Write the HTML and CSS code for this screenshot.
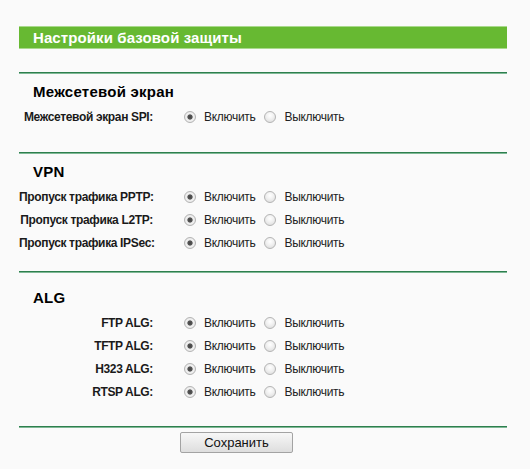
FILE: index.html
```html
<!DOCTYPE html>
<html lang="ru">
<head>
<meta charset="utf-8">
<title>Настройки базовой защиты</title>
<link rel="stylesheet" href="styles.css">
</head>
<body>
<div class="page">
  <div class="title-bar">Настройки базовой защиты</div>
  <div class="section s1">
    <div class="heading">Межсетевой экран</div>
    <div class="row">
      <div class="label">Межсетевой экран SPI:</div>
      <div class="choice">
        <input type="radio" name="spi" checked><span class="opt">Включить</span>
        <input type="radio" name="spi" class="second"><span class="opt">Выключить</span>
      </div>
    </div>
  </div>
  <div class="section s2">
    <div class="heading">VPN</div>
    <div class="row">
      <div class="label">Пропуск трафика PPTP:</div>
      <div class="choice">
        <input type="radio" name="pptp" checked><span class="opt">Включить</span>
        <input type="radio" name="pptp" class="second"><span class="opt">Выключить</span>
      </div>
    </div>
    <div class="row">
      <div class="label">Пропуск трафика L2TP:</div>
      <div class="choice">
        <input type="radio" name="l2tp" checked><span class="opt">Включить</span>
        <input type="radio" name="l2tp" class="second"><span class="opt">Выключить</span>
      </div>
    </div>
    <div class="row">
      <div class="label">Пропуск трафика IPSec:</div>
      <div class="choice">
        <input type="radio" name="ipsec" checked><span class="opt">Включить</span>
        <input type="radio" name="ipsec" class="second"><span class="opt">Выключить</span>
      </div>
    </div>
  </div>
  <div class="section s3">
    <div class="heading">ALG</div>
    <div class="row">
      <div class="label">FTP ALG:</div>
      <div class="choice">
        <input type="radio" name="ftp" checked><span class="opt">Включить</span>
        <input type="radio" name="ftp" class="second"><span class="opt">Выключить</span>
      </div>
    </div>
    <div class="row">
      <div class="label">TFTP ALG:</div>
      <div class="choice">
        <input type="radio" name="tftp" checked><span class="opt">Включить</span>
        <input type="radio" name="tftp" class="second"><span class="opt">Выключить</span>
      </div>
    </div>
    <div class="row">
      <div class="label">H323 ALG:</div>
      <div class="choice">
        <input type="radio" name="h323" checked><span class="opt">Включить</span>
        <input type="radio" name="h323" class="second"><span class="opt">Выключить</span>
      </div>
    </div>
    <div class="row">
      <div class="label">RTSP ALG:</div>
      <div class="choice">
        <input type="radio" name="rtsp" checked><span class="opt">Включить</span>
        <input type="radio" name="rtsp" class="second"><span class="opt">Выключить</span>
      </div>
    </div>
  </div>
  <div class="footer">
    <button type="button" class="save">Сохранить</button>
  </div>
</div>
</body>
</html>
```
FILE: styles.css
```css
html, body {
  margin: 0;
  padding: 0;
  background: #fafafa;
}
body {
  font-family: "Liberation Sans", Arial, sans-serif;
  color: #111;
}
.page {
  margin: 26px 23px 0 19px;
  width: 488px;
}
.title-bar {
  height: 21px;
  line-height: 21px;
  background: #67b932;
  border-top: 1px solid #a9d98c;
  border-bottom: 1px solid #a9d98c;
  color: #fff;
  font-weight: bold;
  font-size: 15px;
  letter-spacing: 0.1px;
  padding-left: 14px;
  margin-bottom: 23px;
}
.section {
  border-top: 1px solid #2d7f4e;
  box-shadow: inset 0 1px 0 #7fb896;
  padding-top: 9px;
}
.heading {
  height: 20px;
  line-height: 20px;
  font-size: 15px;
  font-weight: bold;
  letter-spacing: 0.25px;
  padding-left: 14px;
  margin-bottom: 3px;
  color: #000;
}
.s1 { padding-bottom: 24px; }
.s2 { padding-bottom: 17px; }
.s3 { padding-top: 16px; padding-bottom: 23px; }
.row {
  display: grid;
  grid-template-columns: 134px auto;
  column-gap: 31px;
  align-items: center;
  height: 23px;
}
.label {
  text-align: right;
  font-size: 12px;
  font-weight: bold;
  letter-spacing: -0.35px;
  white-space: nowrap;
  color: #1a1a1a;
}
.choice {
  display: flex;
  align-items: center;
  font-size: 12px;
  letter-spacing: -0.3px;
  color: #222;
}
.choice input {
  appearance: none;
  -webkit-appearance: none;
  width: 12px;
  height: 12px;
  margin: 0 8px 0 0;
  border: 1px solid #b4b4b4;
  border-radius: 50%;
  background: radial-gradient(circle at 50% 35%, #ffffff 0%, #f0f0f0 45%, #d8d8d8 100%);
  box-sizing: border-box;
}
.choice input:checked {
  background: radial-gradient(circle, #444 0, #555 2.2px, #e6e6e6 3px, #f2f2f2 55%, #d6d6d6 100%);
}
.choice input.second {
  margin-left: 9px;
}
.footer {
  border-top: 1px solid #2d7f4e;
  box-shadow: inset 0 1px 0 #7fb896;
  padding: 5px 0 0 161px;
}
.save {
  width: 113px;
  height: 21px;
  font-family: "Liberation Sans", Arial, sans-serif;
  font-size: 13px;
  color: #111;
  border: 1px solid #a3a3a3;
  border-radius: 2px;
  background: linear-gradient(#f7f7f7, #dedede);
  padding: 0;
}
```
